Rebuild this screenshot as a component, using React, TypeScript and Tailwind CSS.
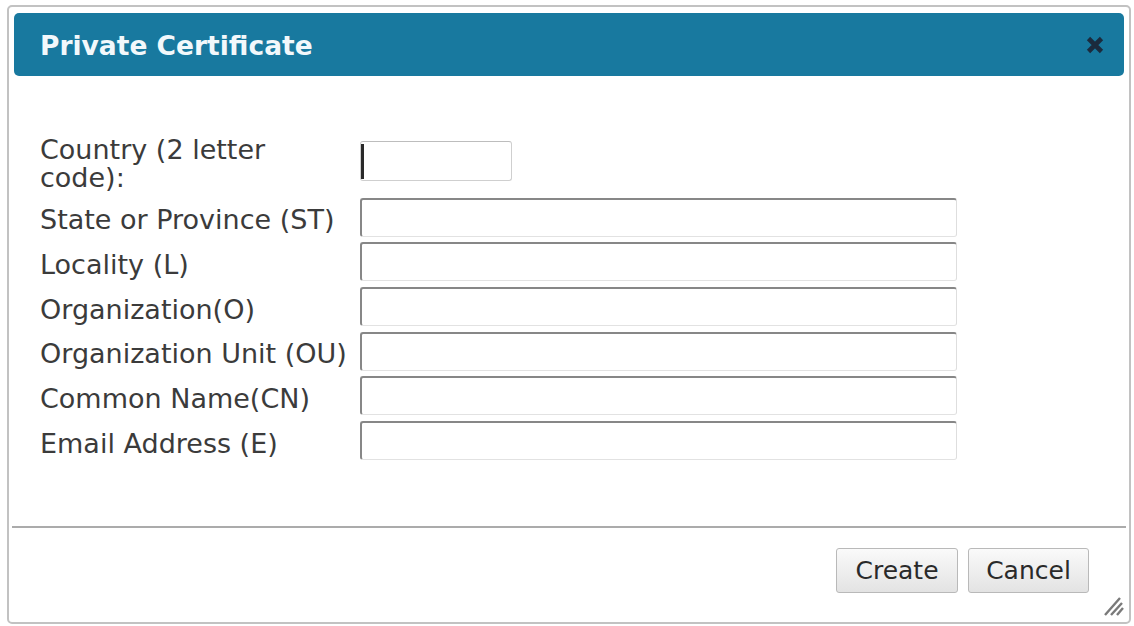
import type { ReactNode } from "react";

const FIELDS = [
  "State or Province (ST)",
  "Locality (L)",
  "Organization(O)",
  "Organization Unit (OU)",
  "Common Name(CN)",
  "Email Address (E)",
];

const inputCls =
  "block h-[39px] w-[597px] rounded-[3px] border-t-2 border-l-2 border-r border-b border-t-[#878787] border-l-[#878787] border-r-[#dedede] border-b-[#e2e2e2] bg-white px-2 text-[22px] outline-none";

function Label({ children }: { children: ReactNode }) {
  return <div className="w-[320px] pr-2 pt-[6px] text-[27px] leading-[28px] text-[#3b3b3b]">{children}</div>;
}

function DialogButton({ children, w }: { children: ReactNode; w: string }) {
  return (
    <button
      type="button"
      className={`${w} h-[45px] rounded-[3px] border border-[#b9b9b9] bg-gradient-to-b from-[#fafafa] to-[#e3e3e3] text-[25px] text-[#2a2a2a]`}
    >
      {children}
    </button>
  );
}

export default function App() {
  return (
    <div className="h-[626px] w-[1134px] overflow-hidden bg-white pl-[7px] pt-[5px] font-['DejaVu_Sans',sans-serif]">
      <div className="relative flex h-[619px] w-[1124px] flex-col rounded-[5px] border-2 border-[#c2c2c2] bg-white">
        {/* title bar */}
        <div className="mx-[5px] mt-[6px] flex h-[63px] items-center justify-between rounded-[5px] bg-[#18799f] pl-[26px] pr-[20px]">
          <span className="pt-[2px] text-[26.5px] font-bold text-[#f2f8fb]">Private Certificate</span>
          <svg width="18" height="18" viewBox="0 0 18 18">
            <path d="M2.5 2.5 L15.5 15.5 M15.5 2.5 L2.5 15.5" stroke="#1b2b3d" strokeWidth="4.6" />
          </svg>
        </div>

        {/* form */}
        <div className="flex-1 pl-[31px] pt-[54px]">
          <div className="grid grid-cols-[320px_597px] items-center gap-y-[5.7px]">
            <Label>Country (2 letter code):</Label>
            <div className="relative">
              <input
                className="block h-[40px] w-[152px] rounded-[3px] border border-[#cfcfcf] border-t-[#bdbdbd] bg-white px-2 text-[22px] outline-none"
                defaultValue=""
              />
              <span className="absolute left-[1px] top-[3px] h-[35px] w-[3px] bg-[#2a2a2a]" />
            </div>
            {FIELDS.map((f) => (
              <div key={f} className="contents">
                <Label>{f}</Label>
                <input className={inputCls} defaultValue="" />
              </div>
            ))}
          </div>
        </div>

        {/* footer */}
        <div className="mx-[3px] h-[2px] bg-[#ababab]" />
        <div className="flex h-[94px] justify-end gap-[10px] pr-[40px] pt-[20px]">
          <DialogButton w="w-[122px]">Create</DialogButton>
          <DialogButton w="w-[121px]">Cancel</DialogButton>
        </div>

        {/* resize grip */}
        <svg className="absolute bottom-[6px] right-[5px]" width="21" height="21" viewBox="0 0 21 21">
          <path d="M2 20 L17 3 M8 20 L19 8 M14 20 L20 13" stroke="#7a7a7a" strokeWidth="2.4" />
        </svg>
      </div>
    </div>
  );
}
